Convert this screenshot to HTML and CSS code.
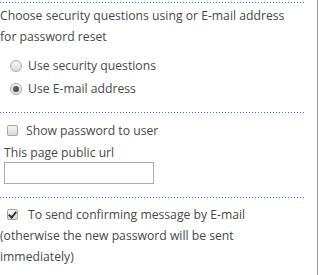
FILE: index.html
```html
<!DOCTYPE html>
<html lang="en">
<head>
<meta charset="utf-8">
<title>Password settings</title>
<link rel="stylesheet" href="styles.css">
</head>
<body>
<div class="panel">
  <div class="rule"></div>
  <p class="desc">Choose security questions using or E-mail address<br>for password reset</p>
  <div class="radios">
    <label class="opt"><span class="radio"></span>Use security questions</label>
    <label class="opt"><span class="radio checked"></span>Use E-mail address</label>
  </div>
  <div class="rule rule-2"></div>
  <label class="check-row"><span class="box"></span>Show password to user</label>
  <div class="field-label">This page public url</div>
  <div class="input"></div>
  <div class="rule rule-3"></div>
  <p class="confirm"><span class="box checked"></span>To send confirming message by E-mail<br>(otherwise the new password will be sent<br>immediately)</p>
</div>
</body>
</html>
```
FILE: styles.css
```css
html, body {
  margin: 0;
  padding: 0;
  background: #fff;
}
body {
  font-family: "Open Sans", "Noto Sans", sans-serif;
  font-size: 12.2px;
  color: #484848;
}
.panel {
  width: 318px;
  min-height: 275px;
  box-sizing: border-box;
  border-right: 1px solid #9a9a9a;
  padding-top: 2px;
}
.rule {
  width: 304px;
  height: 1px;
  background: repeating-linear-gradient(90deg, #3d7bd9 0 1px, transparent 1px 3px);
}
.desc {
  margin: 2px 0 0;
  line-height: 21px;
  white-space: nowrap;
}
.radios {
  margin-top: 7px;
  padding-left: 10px;
  display: flex;
  flex-direction: column;
}
.opt {
  display: flex;
  align-items: center;
  height: 23px;
  gap: 6px;
}
.radio {
  width: 10px;
  height: 10px;
  border-radius: 50%;
  border: 1px solid #a9a9a9;
  background: linear-gradient(#f4f4f4, #dcdcdc);
  position: relative;
  flex: none;
}
.radio.checked::after {
  content: "";
  position: absolute;
  left: 2px;
  top: 2px;
  width: 6px;
  height: 6px;
  border-radius: 50%;
  background: radial-gradient(circle at 40% 40%, #6a6a6a, #333);
}
.rule-2 { margin-top: 12px; }
.check-row {
  display: flex;
  align-items: center;
  height: 21px;
  margin-top: 7px;
  padding-left: 7px;
  gap: 8px;
}
.box {
  display: inline-block;
  width: 9px;
  height: 9px;
  border: 1px solid #a5a5a5;
  border-radius: 2px;
  background: linear-gradient(#f6f6f6, #d8d8d8);
  position: relative;
  flex: none;
}
.box.checked::after {
  content: "";
  position: absolute;
  left: 2px;
  top: 0px;
  width: 3px;
  height: 6px;
  border-right: 2px solid #333;
  border-bottom: 2px solid #333;
  transform: rotate(40deg);
}
.field-label {
  margin-top: 3px;
  margin-left: 4px;
  line-height: 18px;
}
.input {
  margin-left: 4px;
  width: 150px;
  height: 22px;
  box-sizing: border-box;
  border: 1px solid #ababab;
  background: #fff;
}
.rule-3 { margin-top: 13px; }
.confirm {
  margin: 6px 0 0;
  line-height: 21px;
  white-space: nowrap;
}
.confirm .box {
  margin-left: 7px;
  margin-right: 10px;
  vertical-align: -1px;
}
```
